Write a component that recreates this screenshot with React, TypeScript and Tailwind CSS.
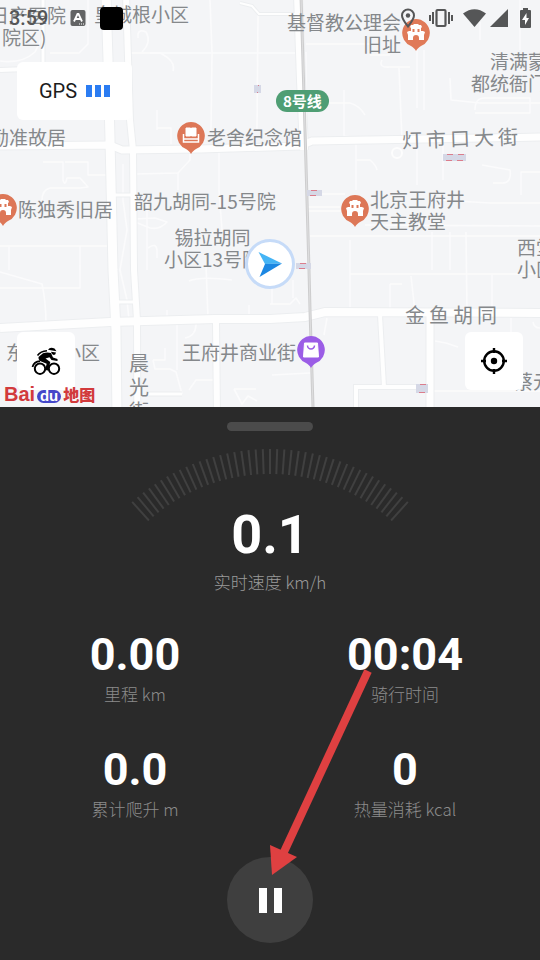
import type { ReactNode } from "react";

interface Place {
  lines: string[];
  className: string;
}

const PLACES: Place[] = [
  { lines: ["日产医院"], className: "left-[-10px] top-[4px]" },
  { lines: ["院区)"], className: "left-[2px] top-[26px]" },
  { lines: ["皇城根小区"], className: "left-[94px] top-[3px]" },
  { lines: ["基督教公理会", "旧址"], className: "left-[287px] top-[11px] text-right" },
  { lines: ["清满蒙古"], className: "left-[490px] top-[50px]" },
  { lines: ["都统衙门"], className: "left-[471px] top-[72px]" },
  { lines: ["励准故居"], className: "left-[-10px] top-[126px]" },
  { lines: ["老舍纪念馆"], className: "left-[207px] top-[126px]" },
  { lines: ["陈独秀旧居"], className: "left-[18px] top-[198px]" },
  { lines: ["韶九胡同-15号院"], className: "left-[134px] top-[190px]" },
  { lines: ["锡拉胡同", "小区13号院"], className: "left-[164px] top-[226px] text-center" },
  { lines: ["北京王府井", "天主教堂"], className: "left-[370px] top-[188px]" },
  { lines: ["西堂子", "小区"], className: "left-[517px] top-[236px]" },
  { lines: ["王府井商业街"], className: "left-[182px] top-[341px]" },
  { lines: ["东"], className: "left-[6px] top-[341px]" },
  { lines: ["小区"], className: "left-[62px] top-[341px]" },
  { lines: ["蔡元培故居"], className: "left-[514px] top-[370px]" },
];

const STREETS = [
  { name: "灯市口大街", className: "left-[402px] top-[127px] flex-row gap-1 -rotate-2" },
  { name: "金鱼胡同", className: "left-[405px] top-[304px] flex-row gap-1" },
  { name: "晨光街", className: "left-[129px] top-[352px] flex-col gap-0.5" },
];

const MAJOR_ROADS = [
  { d: "M106 -5 L108 60 L110 140 L113 270 L116 330 L119 600", width: 9 },
  { d: "M126 -5 L130 120 L133 150 L134 270 L137 320 L138 600", width: 6 },
  { d: "M0 70 L108 66", width: 4 },
  { d: "M0 146 L110 145 L122 150 L200 149 L300 146 L312 141 L545 137", width: 7 },
  { d: "M0 328 L110 322 L215 319 L270 319 L305 317 L325 312 L545 313", width: 8 },
  { d: "M298 -5 L301 80 L304 150", width: 8 },
  { d: "M216 322 L219 600", width: 6 },
  { d: "M430 315 V600", width: 7 },
  { d: "M380 315 L384 387", width: 4 },
  { d: "M356 600 V387 H426", width: 4 },
  { d: "M114 195 H133", width: 3 },
  { d: "M118 302 H137", width: 3 },
  { d: "M240 3 L252 6 L259 14 H298", width: 2 },
  { d: "M43 0 V62", width: 3 },
  { d: "M147 394 H182", width: 3 },
];

const MINOR_ROADS = [
  "M0 61 Q22 64 35 52 L43 36",
  "M88 0 V44 L79 53 H50",
  "M130 53 H160 Q176 61 173 71",
  "M142 52 Q152 42 146 32 Q137 28 138 38",
  "M150 53 H298",
  "M210 0 L212 53 L211 130",
  "M258 14 L257 130",
  "M157 130 V110 M157 128 H171 V144",
  "M43 162 H63 V180 Q65 187 67 178 H80 L88 187 L80 188 H50 Q42 190 42 200",
  "M65 162 H88 V175 H107",
  "M135 174 L178 173 L190 160 V148",
  "M178 173 V190 M219 148 V190 L222 230",
  "M0 246 H108 M80 246 V270",
  "M9 246 V270 M147 200 V270",
  "M135 219 L155 218 L167 222 Q160 230 150 228 L135 222",
  "M148 248 Q156 242 157 250 V258",
  "M0 272 L42 284 Q46 302 46 325",
  "M0 288 H80 V265",
  "M123 164 V200 L127 230 L120 270 L127 300 L129 320",
  "M206 265 L208 318 M167 310 V318",
  "M189 281 Q200 276 232 280 M249 305 V318",
  "M153 360 H165 V348 M153 360 L155 369 H170 L176 372 L182 394 M177 321 V370",
  "M196 324 Q196 336 185 338 M219 380 H196 L189 390",
  "M234 389 L242 404 L248 396 L257 401 M234 389 H256",
  "M306 44 H370 M370 55 H390 M382 60 Q378 68 390 67 H410",
  "M399 68 L402 140 M417 50 V108 M424 50 V110",
  "M306 52 V130 M344 90 V136 L372 140",
  "M306 103 H350 Q360 106 365 115",
  "M450 78 L451 100 L480 103 H540",
  "M475 110 Q475 97 486 98 H530 V113 H475",
  "M480 40 V22 M520 0 V50",
  "M356 160 H370 Q376 165 377 170",
  "M356 140 V190 M417 146 V185 M443 146 V180",
  "M482 165 L510 170 Q512 183 502 183 H493",
  "M540 172 H521 V195",
  "M306 194 H345 M306 207 H340 M306 211 H360",
  "M440 200 L490 203 H540 M365 225 L540 226",
  "M310 236 H540 M350 240 V310 M432 232 V270 M450 232 V270",
  "M350 274 H540 M390 284 V308 M390 284 H402",
  "M411 276 L415 312 M466 232 L467 312 M492 274 V312",
  "M435 341 L446 343 L458 347 M434 391 H540",
  "M511 318 V332 M533 322 Q534 328 540 328",
  "M270 304 H290 L296 298 L300 304 M293 280 V298 M272 260 V304",
  "M272 375 L310 373 M327 318 L324 335",
];

const STATIONS = [
  { x: 254, y: 85, w: 7, h: 8 },
  { x: 307, y: 190, w: 15, h: 6 },
  { x: 443, y: 154, w: 23, h: 7 },
  { x: 296, y: 263, w: 15, h: 6 },
  { x: 416, y: 384, w: 12, h: 9 },
];

const STATS = [
  { value: "0.00", label: "里程 km" },
  { value: "00:04", label: "骑行时间" },
  { value: "0.0", label: "累计爬升 m" },
  { value: "0", label: "热量消耗 kcal" },
];

const CJK = "font-['Noto_Sans_CJK_SC',sans-serif]";

function Roads() {
  return (
    <svg className="absolute left-0 top-0 h-full w-full" aria-hidden="true" fill="none">
      {MINOR_ROADS.map((d) => (
        <path key={d} d={d} stroke="#fbfbfc" strokeWidth="1.6" strokeLinejoin="round" />
      ))}
      {MAJOR_ROADS.map((r) => (
        <path key={r.d} d={r.d} stroke="#eceef0" strokeWidth={r.width + 2} />
      ))}
      {MAJOR_ROADS.map((r) => (
        <path key={r.d} d={r.d} stroke="#fefefe" strokeWidth={r.width} />
      ))}
      <circle cx="397" cy="153" r="5" stroke="#fdfdfd" strokeWidth="2" />
      <path d="M301 -5 L305 130 L309 270 L310 310 L313 407 L319 600" stroke="#cdcdce" strokeWidth="3" />
      <path d="M301 -5 L305 130 L309 270 L310 310 L313 407 L319 600" stroke="#dededf" strokeWidth="1" />
      {STATIONS.map((s) => (
        <g key={s.x}>
          <rect x={s.x} y={s.y} width={s.w} height={s.h} fill="#d5d8e6" />
          <path
            d={`M${s.x + 4} ${s.y + 0.5} H${s.x + s.w - 2} M${s.x + 3} ${s.y + s.h - 0.5} H${s.x + s.w - 3}`}
            stroke="#db7d8c"
            strokeWidth="1"
            strokeDasharray="6 5"
          />
        </g>
      ))}
    </svg>
  );
}

function Pin({ className, color, children }: { className: string; color: string; children: ReactNode }) {
  return (
    <svg className={`absolute h-[34px] w-[30px] ${className}`} viewBox="0 0 30 34" aria-hidden="true">
      <path d="M15 1a14 14 0 0 0-5 27c2 1 4 3 5 5c1-2 3-4 5-5A14 14 0 0 0 15 1z" fill={color} />
      {children}
    </svg>
  );
}

function Temple() {
  return (
    <path
      fill="#fff"
      fillRule="evenodd"
      d="M9 9l1-2h2l1-1h4l1 1h2l1 2-1 1v3h2l2 1-1 3v5h-5v-2a3 3 0 0 0-6 0v2H7v-5l-1-3 2-1h2v-3zM11.500 11v3h2v-3zM16.500 11v3h2v-3z"
    />
  );
}

function StatusBar() {
  return (
    <div className="relative flex h-9 items-center px-[9px] text-[#555657]">
      <time className="font-['Roboto',sans-serif] text-xl font-medium">3:59</time>
      <svg className="ml-[22px] h-4 w-4" viewBox="0 0 16 16" aria-hidden="true">
        <rect x="0.500" width="15" height="16" rx="2" fill="#636465" />
        <path d="M4 11.500L7.500 4h1L12 11.500M5.500 9h5" stroke="#fff" strokeWidth="1.800" fill="none" />
        <path d="M9 14h5" stroke="#fff" strokeDasharray="1 1" />
      </svg>
      <span className="ml-[14px] h-[23px] w-[23px] rounded-sm bg-black" />
      <div className="ml-auto flex items-center">
        <svg className="mr-3 h-5 w-4" viewBox="0 0 16 20" fill="none" stroke="currentColor" aria-hidden="true">
          <path d="M8 18.500C5 14.500 2 11 2 7.500a6 6 0 0 1 12 0C14 11 11 14.500 8 18.500z" strokeWidth="2" />
          <circle cx="8" cy="7.500" r="2.200" fill="currentColor" stroke="none" />
        </svg>
        <svg className="mr-[9px] h-5 w-[26px]" viewBox="0 0 26 20" fill="none" stroke="currentColor" strokeWidth="2" aria-hidden="true">
          <rect x="8.500" y="2" width="9" height="16" rx="1" strokeWidth="2.200" />
          <path d="M5 4v12M21 4v12M2 7v6M24 7v6" />
        </svg>
        <svg className="mr-1 h-[18px] w-[23px]" viewBox="0 0 23 18" fill="currentColor" aria-hidden="true">
          <path d="M0 4.500Q11.500-4 23 4.500L11.500 18z" />
        </svg>
        <svg className="mr-3 h-[18px] w-[18px]" viewBox="0 0 18 18" fill="currentColor" aria-hidden="true">
          <path d="M18 0v18H0z" />
        </svg>
        <svg className="h-5 w-[11px]" viewBox="0 0 11 20" aria-hidden="true">
          <path d="M3 0h5v2h2a1 1 0 0 1 1 1v16a1 1 0 0 1-1 1H1a1 1 0 0 1-1-1V3a1 1 0 0 1 1-1h2z" fill="currentColor" />
          <path d="M6.500 5L2 12h3v5l4-7H6.500z" fill="#fff" />
        </svg>
      </div>
    </div>
  );
}

function CyclistIcon() {
  return (
    <svg className="h-7 w-[30px]" viewBox="0 0 30 28" fill="none" stroke="#000" strokeWidth="2" aria-hidden="true">
      <circle cx="9" cy="21.700" r="5.200" />
      <circle cx="23" cy="21.700" r="5.200" />
      <path d="M1.500 20Q3 14.500 9 14.200" strokeWidth="1.800" />
      <path d="M6.500 8.500Q9.500 4.300 16 3.800" strokeWidth="1.500" />
      <path
        d="M7.500 10L12 6.200Q16 5 20 6L22 10.500L26.500 12V14L20.500 13L18.500 10.300L14.500 11.500L19.300 15L17 23.500L14 23L15.700 16.700L9 14Q7 12 7.500 10z"
        fill="#000"
        stroke="none"
      />
      <path d="M17 2.800Q19 -.5 23.500 1.500L25.500 4.300z" fill="#000" stroke="none" />
      <path d="M20 4.700L25 5.500Q24.500 8 22.700 8Q20.800 7.800 20 4.700z" fill="#000" stroke="none" />
    </svg>
  );
}

function LocateIcon() {
  return (
    <svg className="h-[26px] w-[26px]" viewBox="0 0 26 26" fill="none" stroke="#000" strokeWidth="2.400" aria-hidden="true">
      <circle cx="13" cy="13" r="9.800" />
      <circle cx="13" cy="13" r="3.200" fill="#000" stroke="none" />
      <path d="M13 0v5M13 21v5M0 13h5M21 13h5" />
    </svg>
  );
}

function BaiduLogo() {
  return (
    <div className="absolute bottom-1 left-1 flex h-[18px] items-center text-[#d23a3c]">
      <span className="font-['Liberation_Sans',sans-serif] text-xl leading-[18px] font-bold">Bai</span>
      <span className="ml-0.5 flex h-[13px] w-6 items-center justify-center self-end rounded-full bg-[#4447c9] pb-0.5 font-['Liberation_Sans',sans-serif] text-[15px] leading-none font-bold text-white">
        du
      </span>
      <span className={`ml-0.5 text-base leading-[18px] font-black ${CJK}`}>地图</span>
    </div>
  );
}

function MapView() {
  return (
    <section aria-label="地图" className="relative flex min-h-[407px] flex-1 flex-col overflow-hidden bg-[#f4f5f7]">
      <Roads />
      <div className={`text-[19px] leading-[22px] text-[#85888b] ${CJK}`}>
        {PLACES.map((p) => (
          <p key={p.lines[0]} className={`absolute whitespace-nowrap ${p.className}`}>
            {p.lines.map((line) => (
              <span key={line} className="block">
                {line}
              </span>
            ))}
          </p>
        ))}
        {STREETS.map((s) => (
          <p key={s.name} className={`absolute flex text-xl leading-[22px] ${s.className}`}>
            {[...s.name].map((char) => (
              <span key={char}>{char}</span>
            ))}
          </p>
        ))}
      </div>

      <span className={`absolute left-[276px] top-[90px] rounded-full bg-[#4f9e74] px-[7px] text-[15px] leading-[22px] font-bold text-white ${CJK}`}>
        8号线
      </span>

      <Pin className="left-[401px] top-[18px]" color="#e07a58">
        <Temple />
      </Pin>
      <Pin className="left-[340px] top-[194px]" color="#dd7757">
        <Temple />
      </Pin>
      <Pin className="left-[-12px] top-[193px]" color="#dd7757">
        <Temple />
      </Pin>
      <Pin className="left-[176px] top-[121px]" color="#dd7757">
        <path d="M10 7h4.500v8H10zM15.500 7H20v8h-4.500z" fill="#fff" stroke="#fff" strokeLinejoin="round" />
        <path d="M7.500 13v8h15v-8M8 18h14" fill="none" stroke="#fff" strokeWidth="1.500" />
      </Pin>
      <Pin className="left-[296px] top-[335px]" color="#9b5de6">
        <path d="M8.500 8h13l1 14h-15z" fill="#fff" stroke="#fff" strokeLinejoin="round" />
        <path d="M11.500 10.500a3.500 3.500 0 0 0 7 0" fill="none" stroke="#9b5de6" strokeWidth="1.500" />
      </Pin>

      <svg className="absolute left-[244px] top-[238px] h-[52px] w-[52px]" viewBox="0 0 52 52" aria-hidden="true">
        <circle cx="26" cy="26" r="23.500" fill="#fff" stroke="#c6dbf8" strokeWidth="3" />
        <path d="M14.500 14L38 25.500L21 26z" fill="#45b4f5" />
        <path d="M38 25.500L15.500 39L21 26z" fill="#1c87e2" />
      </svg>

      <StatusBar />
      <div className="relative ml-[17px] mt-[26px] flex h-[58px] items-center self-start rounded-md bg-white px-[22px] font-['Roboto',sans-serif] text-xl text-[#1c1c1c]">
        GPS
        <span className="ml-[9px] flex gap-[3px]" role="img" aria-label="信号强">
          <i className="h-3 w-1.5 bg-[#2b7cf2]" />
          <i className="h-3 w-1.5 bg-[#2b7cf2]" />
          <i className="h-3 w-1.5 bg-[#2b7cf2]" />
        </span>
      </div>
      <div className="relative mt-auto mb-[17px] flex justify-between px-[17px]">
        <button type="button" aria-label="骑行" className="flex h-[58px] w-[58px] items-center justify-center rounded-md bg-white">
          <CyclistIcon />
        </button>
        <button type="button" aria-label="定位" className="flex h-[58px] w-[58px] items-center justify-center rounded-md bg-white">
          <LocateIcon />
        </button>
      </div>
      <BaiduLogo />
    </section>
  );
}

function Gauge() {
  // 43 ticks, two degrees apart, on a circle centred below the dial
  const ticks = Array.from({ length: 43 }, (_, i) => i * 2 - 42);
  return (
    <svg className="mt-[18px] h-[72px] w-[280px]" viewBox="0 0 280 72" aria-hidden="true">
      {ticks.map((deg) => (
        <path key={deg} d="M140 0v25" stroke="#404040" strokeWidth="2" transform={`rotate(${deg} 140 206)`} />
      ))}
    </svg>
  );
}

function RidePanel() {
  return (
    <main className="relative flex flex-col items-center bg-[#2a2a2a] pt-[15px] pb-[17px]">
      <div className="h-[9px] w-[86px] rounded-full bg-[#4b4b4b]" />
      <Gauge />
      <p className="-mt-[14px] font-['Roboto',sans-serif] text-[54px] leading-[56px] font-bold text-white">0.1</p>
      <p className={`mt-[7px] text-[17px] leading-6 font-light text-[#9a9a9a] ${CJK}`}>实时速度 km/h</p>
      <dl className="mt-[37px] grid w-full grid-cols-2 gap-y-10 text-center">
        {STATS.map((s) => (
          <div key={s.label} className="flex flex-col-reverse gap-[3px]">
            <dt className={`text-[17px] leading-6 font-light text-[#8c8c8c] ${CJK}`}>{s.label}</dt>
            <dd className="font-['Roboto',sans-serif] text-[45px] leading-[48px] font-bold text-white">{s.value}</dd>
          </div>
        ))}
      </dl>
      <button
        type="button"
        aria-label="暂停"
        className="mt-9 flex h-[86px] w-[86px] items-center justify-center gap-[7px] rounded-full bg-[#3f3f3f]"
      >
        <span className="h-[25px] w-2 bg-white" />
        <span className="h-[25px] w-2 bg-white" />
      </button>
      <svg className="absolute bottom-[80px] left-1/2 h-[212px] w-[110px]" viewBox="270 668 110 212" aria-hidden="true">
        <path d="M368 671L283 854" stroke="#df4041" strokeWidth="8" />
        <path d="M270 845L297 857L272 875z" fill="#df4041" />
      </svg>
    </main>
  );
}

export default function App() {
  return (
    <div className="flex min-h-screen flex-col">
      <MapView />
      <RidePanel />
    </div>
  );
}
